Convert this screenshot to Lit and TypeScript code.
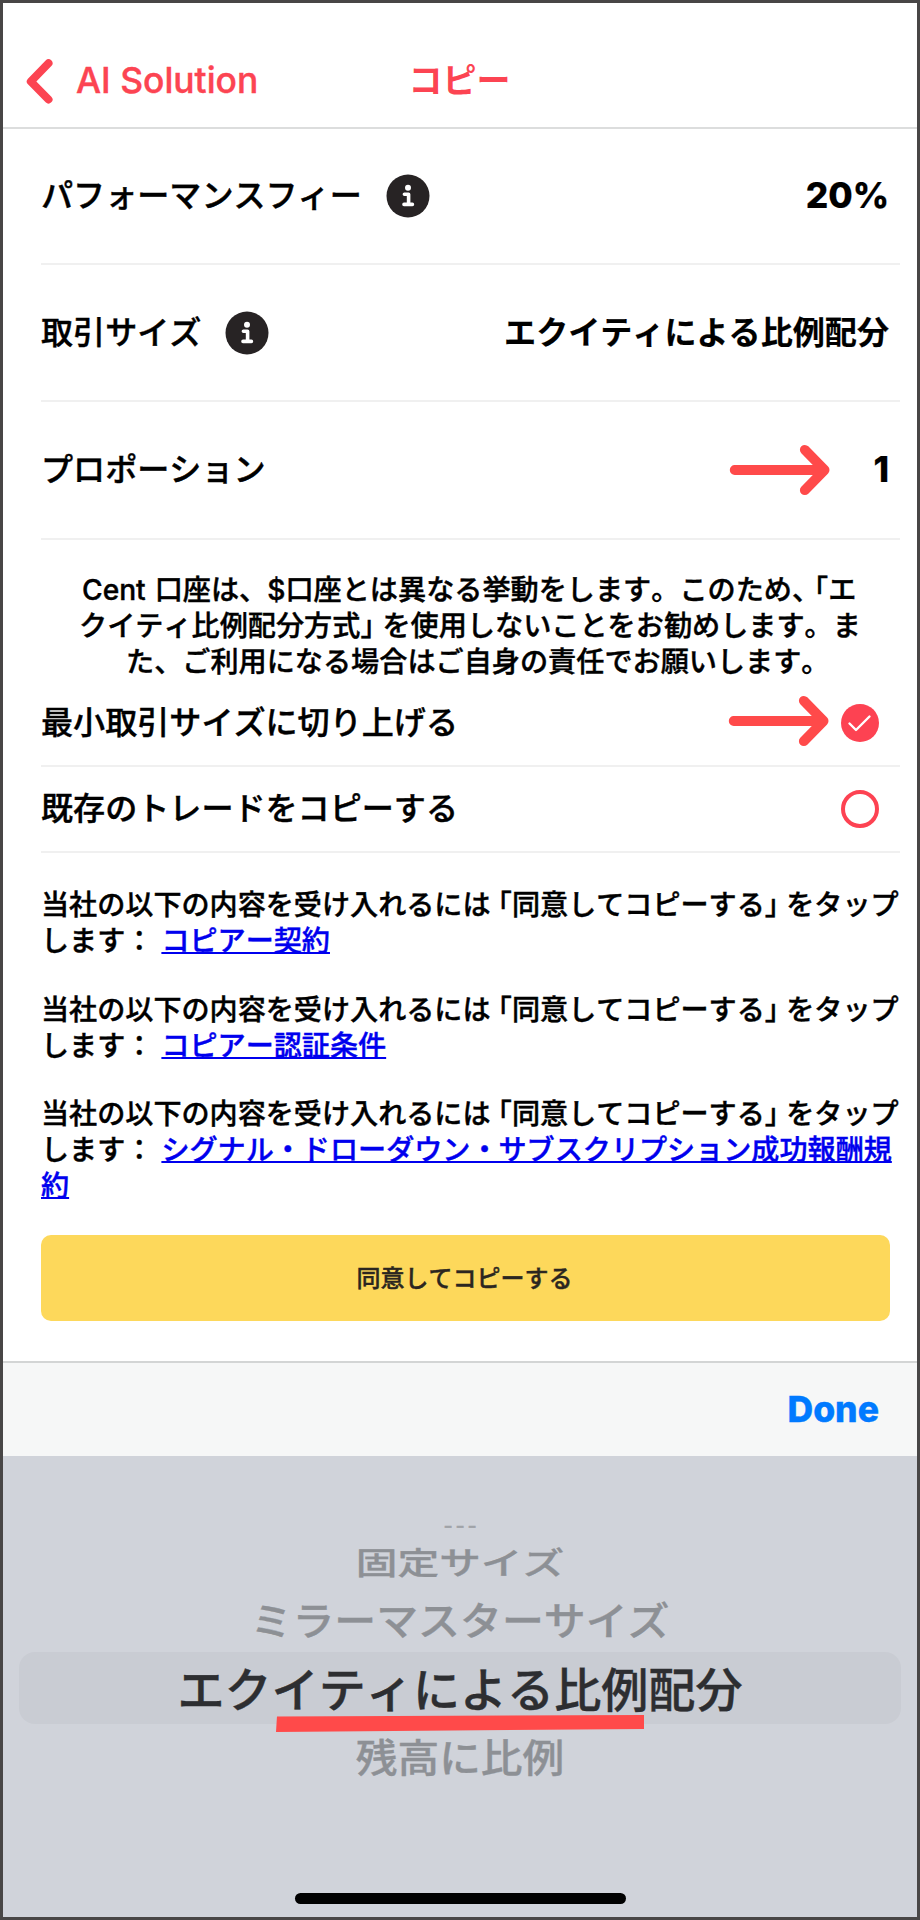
import { LitElement, html, css } from "lit";
import { customElement } from "lit/decorators.js";

const arrow = html`<svg class="arrow" width="102" height="52" viewBox="0 0 102 52">
  <path d="M5.7 26H94M75.8 5.8L95.6 26L75.8 46.2" fill="none" stroke="#ff4a4a" stroke-width="9.8" stroke-linecap="round" stroke-linejoin="round" />
</svg>`;

const info = html`<svg class="info" width="44" height="44" viewBox="0 0 44 44">
  <circle cx="22" cy="22" r="21.5" fill="#272324" />
  <circle cx="22" cy="13.8" r="3" fill="#fff" />
  <path d="M18.4 20.2H22.6V30M18 30.4H26.4" fill="none" stroke="#fff" stroke-width="3.6" stroke-linecap="round" stroke-linejoin="round" />
</svg>`;

@customElement("app-root")
export class AppRoot extends LitElement {
  static styles = css`
    :host { display: block; }
    * { box-sizing: border-box; }
    .screen {
      width: 920px; height: 1920px; border: 3px solid #484646; background: #fff;
      display: flex; flex-direction: column; overflow: hidden; color: #000;
      font-family: Inter, "Noto Sans CJK JP", sans-serif; font-weight: 500; font-kerning: none;
      -webkit-text-stroke: 0.4px currentColor;
    }
    .nav {
      height: 126px; flex: none; border-bottom: 2px solid #dcdddd; color: #fc4452;
      display: grid; grid-template-columns: 1fr auto 1fr; align-items: center;
      padding: 31px 24px 0 23px; font-size: 34px; line-height: 44px;
    }
    .back { display: flex; align-items: center; gap: 22px; white-space: nowrap; }
    .back-text { font-size: 35.4px; padding-top: 1px; }
    .title { font-weight: 700; -webkit-text-stroke: 0; }
    .body { flex: none; height: 1232px; padding: 0 17px 0 38px; display: flex; flex-direction: column; }
    .row {
      display: flex; align-items: center; justify-content: space-between; flex: none;
      height: 137.2px; border-bottom: 2px solid #f0f0f0; padding-right: 11px; padding-top: 1px;
      font-size: 32.1px; line-height: 40px;
    }
    .fee { height: 136.2px; padding-top: 0; }
    .label { display: flex; align-items: center; gap: 24px; }
    .value { display: flex; align-items: center; font-weight: 700; gap: 42px; -webkit-text-stroke: 0.2px; }
    .num { font-size: 35.3px; font-weight: 800; }
    .note { margin-top: 32px; height: 108px; font-size: 28.15px; line-height: 36px; flex: none; }
    .line { display: block; white-space: nowrap; }
    .n1 { padding-left: 41px; }
    .n2 { padding-left: 38px; }
    .n3 { padding-left: 85px; }
    .option { height: 86.4px; padding-right: 21px; }
    .first { height: 87px; padding-top: 2px; }
    .mark { display: flex; align-items: center; gap: 11px; }
    .mark .arrow { margin-bottom: 4px; }
    .terms { margin-top: 34px; font-size: 28.1px; line-height: 36px; display: flex; flex-direction: column; gap: 32.6px; }
    .term { margin: 0; }
    .open, .close, .comma { font-feature-settings: "halt"; }
    .open { margin-left: 8px; }
    .close { margin-right: 8px; }
    .terms .open { margin-left: 7.4px; }
    .terms .close { margin-right: 7.4px; }
    .link { color: #0000ee; text-decoration: underline; text-underline-offset: 1px; text-decoration-thickness: 2px; text-decoration-skip-ink: none; }
    .gap { display: inline-block; width: 8px; }
    .n1 .gap { width: 9px; }
    .agree {
      margin: 30.5px 0 0; width: 849px; height: 86px; border: 0; border-radius: 10px; background: #fdd85b;
      color: #2b2620; font: inherit; font-size: 24px; padding: 0 2px 2px 0; flex: none;
    }
    .toolbar {
      flex: none; height: 95px; border-top: 2px solid #d3d5d5; background: #f6f7f7; color: #007aff;
      display: flex; align-items: center; justify-content: flex-end; padding-right: 38px;
      font-size: 35.5px; font-weight: 800;
    }
    .picker {
      flex: 1; background: #d0d3da; position: relative; display: flex; flex-direction: column; align-items: center;
      padding-top: 55px; color: #8d9095; font-size: 41.7px;
    }
    .item { white-space: nowrap; display: flex; align-items: center; justify-content: center; flex: none; }
    .dots { height: 29px; font-size: 20px; letter-spacing: 2.8px; padding-left: 3px; color: #a0a3a8; }
    .fixed { height: 42px; transform: scaleY(0.74); }
    .mirror { height: 70px; font-size: 41.9px; transform: scaleY(0.93); }
    .chosen { height: 72px; padding-bottom: 4px; width: 882px; border-radius: 16px; background: #c9ccd3; color: #2d2e31; font-size: 47.1px; }
    .below { height: 61px; transform: scaleY(0.93); }
    .underline { position: absolute; left: 272px; top: 258px; }
    .home { margin-top: auto; margin-bottom: 13px; width: 331px; height: 11px; border-radius: 6px; background: #000; flex: none; }
  `;

  term(content: unknown) {
    return html`<p class="term"><span class="line">当社の以下の内容を受け入れるには<span class="open">「</span>同意してコピーする<span class="close">」</span>をタップ</span>${content}</p>`;
  }

  render() {
    return html`<div class="screen">
      <header class="nav">
        <div class="back">
          <svg width="28" height="46" viewBox="0 0 28 46"><path d="M22.5 5.2L4.8 23.5L22.5 41.5" fill="none" stroke="currentColor" stroke-width="8" stroke-linecap="round" stroke-linejoin="round" /></svg>
          <span class="back-text">AI Solution</span>
        </div>
        <span class="title">コピー</span>
      </header>
      <main class="body">
        <div class="row fee"><span class="label">パフォーマンスフィー${info}</span><span class="value num">20%</span></div>
        <div class="row"><span class="label">取引サイズ${info}</span><span class="value">エクイティによる比例配分</span></div>
        <div class="row"><span class="label">プロポーション</span><span class="value">${arrow}<span class="num">1</span></span></div>
        <div class="note">
          <span class="line n1">Cent<span class="gap"></span>口座は、$口座とは異なる挙動をします。このため<span class="comma">、</span><span class="open">「</span>エ</span>
          <span class="line n2">クイティ比例配分方式<span class="close">」</span>を使用しないことをお勧めします。ま</span>
          <span class="line n3">た、ご利用になる場合はご自身の責任でお願いします。</span>
        </div>
        <div class="row option first"><span>最小取引サイズに切り上げる</span><span class="mark">${arrow}
          <svg width="38" height="38" viewBox="0 0 38 38"><circle cx="19" cy="19" r="19" fill="#fd4252" /><path d="M8.5 19.5L15 26L28.5 12.5" fill="none" stroke="#fff" stroke-width="2.4" stroke-linecap="round" stroke-linejoin="round" /></svg></span></div>
        <div class="row option"><span>既存のトレードをコピーする</span>
          <svg width="38" height="38" viewBox="0 0 38 38"><circle cx="19" cy="19" r="17" fill="none" stroke="#fd4252" stroke-width="4" /></svg></div>
        <div class="terms">
          ${this.term(html`<span class="line">します：<span class="gap"></span><a class="link">コピアー契約</a></span>`)}
          ${this.term(html`<span class="line">します：<span class="gap"></span><a class="link">コピアー認証条件</a></span>`)}
          ${this.term(html`<span class="line">します：<span class="gap"></span><a class="link">シグナル・ドローダウン・サブスクリプション成功報酬規</a></span><span class="line"><a class="link">約</a></span>`)}
        </div>
        <button class="agree">同意してコピーする</button>
      </main>
      <div class="toolbar">Done</div>
      <section class="picker">
        <div class="item dots">---</div>
        <div class="item fixed">固定サイズ</div>
        <div class="item mirror">ミラーマスターサイズ</div>
        <div class="item chosen">エクイティによる比例配分</div>
        <div class="item below">残高に比例</div>
        <svg class="underline" width="372" height="20" viewBox="0 0 372 20"><path d="M2 2.5L369 1V15L1 18Z" fill="#ff4a4a" /></svg>
        <div class="home"></div>
      </section>
    </div>`;
  }
}
